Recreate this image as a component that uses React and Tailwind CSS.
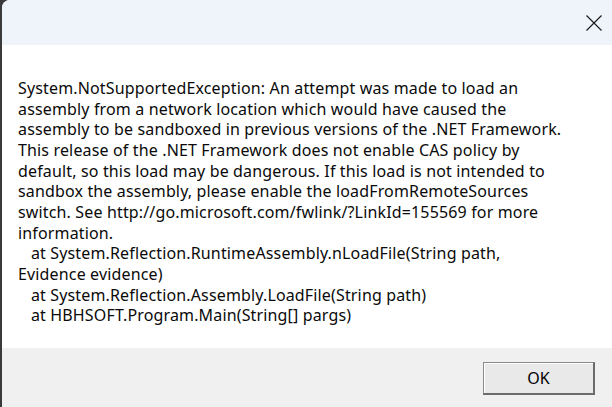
import React from 'react';

const lines = [
  'System.NotSupportedException: An attempt was made to load an',
  'assembly from a network location which would have caused the',
  'assembly to be sandboxed in previous versions of the .NET Framework.',
  'This release of the .NET Framework does not enable CAS policy by',
  'default, so this load may be dangerous. If this load is not intended to',
  'sandbox the assembly, please enable the loadFromRemoteSources',
  'switch. See http://go.microsoft.com/fwlink/?LinkId=155569 for more',
  'information.',
  '   at System.Reflection.RuntimeAssembly.nLoadFile(String path,',
  'Evidence evidence)',
  '   at System.Reflection.Assembly.LoadFile(String path)',
  '   at HBHSOFT.Program.Main(String[] pargs)',
];

export default function App() {
  return (
    <div className="w-[612px] h-[407px] bg-[#3a3a3a] overflow-hidden">
      <div className="ml-[2px] h-full rounded-tl-[8px] overflow-hidden flex flex-col bg-white">
        {/* title bar */}
        <div className="h-[45px] bg-[#eff3fa] flex items-start justify-end shrink-0">
          <button className="w-[46px] h-[45px] flex items-center justify-center">
            <svg width="16" height="16" viewBox="0 0 16 16" className="ml-[10px]">
              <path d="M0.5 0.5 L15.5 15.5 M15.5 0.5 L0.5 15.5" stroke="#1b1b1b" strokeWidth="1.2" fill="none" />
            </svg>
          </button>
        </div>

        {/* message */}
        <div className="flex-1 bg-white pl-[16px] pt-[33px]">
          <div className="font-['Noto_Sans',sans-serif] text-[16px] tracking-[0.15px] leading-[20.67px] text-[#0a0a0a] whitespace-pre">
            {lines.map((l, i) => (
              <div key={i}>{l}</div>
            ))}
          </div>
        </div>

        {/* footer */}
        <div className="h-[59px] bg-[#f0f0f0] flex items-start justify-end pr-[17px] pt-[14px] shrink-0">
          <button className="w-[112px] h-[33px] bg-[#e9e9e9] border border-[#8a8a8a] border-r-2 border-b-2 border-r-[#6b6b6b] border-b-[#6b6b6b] shadow-[inset_1px_1px_0_#ffffff] font-['Noto_Sans',sans-serif] text-[16px] text-black">
            OK
          </button>
        </div>
      </div>
    </div>
  );
}
